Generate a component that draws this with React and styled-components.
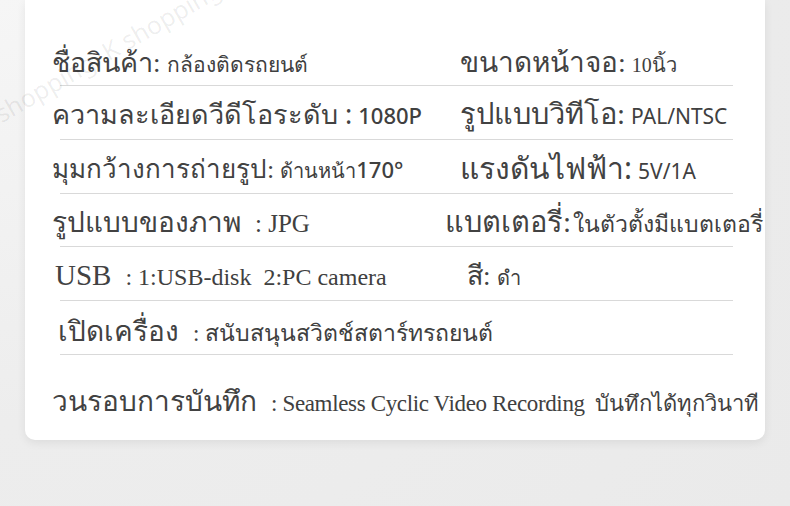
import styled, { createGlobalStyle } from 'styled-components';

const GlobalStyle = createGlobalStyle`
  html, body {
    margin: 0;
    padding: 0;
    width: 790px;
    height: 506px;
    overflow: hidden;
  }
  body {
    background: radial-gradient(circle at 0% 0%, #f6f6f6 0%, #ededed 45%, #eaeaea 100%);
    color: #3a3a3a;
    font-family: "Liberation Serif", serif;
  }
`;

const Page = styled.div`
  position: relative;
  width: 790px;
  height: 506px;
  padding: 0 25px;
  box-sizing: border-box;
`;

const Card = styled.div`
  height: 440px;
  background: #fff;
  border-radius: 0 0 10px 10px;
  box-shadow: 0 3px 10px rgba(0, 0, 0, 0.07);
  padding: 0 0 0 27px;
  box-sizing: border-box;
  display: flex;
  flex-direction: column;
`;

const Row = styled.div`
  display: grid;
  grid-template-columns: 408px 1fr;
  align-items: center;
  height: ${({ $h }) => $h || 53}px;
  padding-top: ${({ $pt }) => $pt || 4}px;
  box-sizing: border-box;
  white-space: nowrap;
`;

const Divider = styled.div`
  height: 1px;
  background: #d9d9d9;
  margin-left: 8px;
  width: 673px;
  flex: none;
`;

const Cell = styled.div`
  display: flex;
  align-items: baseline;
  margin-left: ${({ $shift }) => $shift || 0}px;
  overflow: visible;
`;

const Label = styled.span`
  font-family: ${({ $sans }) => ($sans ? '"Noto Sans", "Liberation Sans", sans-serif' : '"Liberation Serif", serif')};
  font-size: ${({ $size }) => $size || 27}px;
  color: #424242;
`;

const Value = styled.span`
  font-family: ${({ $sans }) => ($sans ? '"Noto Sans", "Liberation Sans", sans-serif' : '"Liberation Serif", serif')};
  font-size: ${({ $size }) => $size || 19}px;
  font-weight: ${({ $bold }) => ($bold ? 500 : 400)};
  letter-spacing: ${({ $ls }) => $ls || 0}px;
  color: #404040;
  margin-left: ${({ $gap }) => $gap ?? 6}px;
`;

const Watermark = styled.div`
  position: absolute;
  left: -12px;
  top: 100px;
  transform: rotate(-30deg);
  transform-origin: left top;
  font-family: "Noto Sans", sans-serif;
  font-size: 25px;
  color: rgba(0, 0, 0, 0.07);
  white-space: nowrap;
  pointer-events: none;
`;

export default function App() {
  return (
    <>
      <GlobalStyle />
      <Page>
        <Card>
          <Row $h={85} $pt={40}>
            <Cell>
              <Label>ชื่อสินค้า:</Label>
              <Value $sans $size={21}>กล้องติดรถยนต์</Value>
            </Cell>
            <Cell>
              <Label $size={28}>ขนาดหน้าจอ:</Label>
              <Value $size={20}>10นิ้ว</Value>
            </Cell>
          </Row>
          <Divider />
          <Row>
            <Cell>
              <Label $sans $size={27}>ความละเอียดวีดีโอระดับ :</Label>
              <Value $sans $bold $size={22}>1080P</Value>
            </Cell>
            <Cell>
              <Label $size={29}>รูปแบบวิทีโอ:</Label>
              <Value $sans $size={21}>PAL/NTSC</Value>
            </Cell>
          </Row>
          <Divider />
          <Row>
            <Cell>
              <Label $size={26}>มุมกว้างการถ่ายรูป:</Label>
              <Value $sans $size={20}>ด้านหน้า</Value>
              <Value $sans $bold $size={22} $gap={0}>170°</Value>
            </Cell>
            <Cell>
              <Label $sans $size={30}>แรงดันไฟฟ้า:</Label>
              <Value $sans $size={21}>5V/1A</Value>
            </Cell>
          </Row>
          <Divider />
          <Row>
            <Cell>
              <Label $size={28}>รูปแบบของภาพ</Label>
              <Value $size={25} $gap={14}>: JPG</Value>
            </Cell>
            <Cell $shift={-15}>
              <Label $size={29}>แบตเตอรี่:</Label>
              <Value $size={23} $gap={2}>ในตัวตั้งมีแบตเตอรี่</Value>
            </Cell>
          </Row>
          <Divider />
          <Row>
            <Cell $shift={3}>
              <Label $size={29}>USB</Label>
              <Value $size={24} $gap={14}>: 1:USB-disk&nbsp;&nbsp;2:PC camera</Value>
            </Cell>
            <Cell $shift={7}>
              <Label>สี:</Label>
              <Value $sans $size={20}>ดำ</Value>
            </Cell>
          </Row>
          <Divider />
          <Row $pt={6}>
            <Cell $shift={6}>
              <Label $size={28}>เปิดเครื่อง</Label>
              <Value $size={23} $gap={14}>: สนับสนุนสวิตช์สตาร์ทรถยนต์</Value>
            </Cell>
          </Row>
          <Divider />
          <Row $h={85} $pt={6}>
            <Cell>
              <Label $size={28}>วนรอบการบันทึก</Label>
              <Value $size={23} $gap={14} $ls={-0.35}>: Seamless Cyclic Video Recording</Value>
              <Value $size={22} $gap={10}>บันทึกได้ทุกวินาที</Value>
            </Cell>
          </Row>
        </Card>
        <Watermark>shopping&nbsp;&nbsp;K shopping</Watermark>
      </Page>
    </>
  );
}
